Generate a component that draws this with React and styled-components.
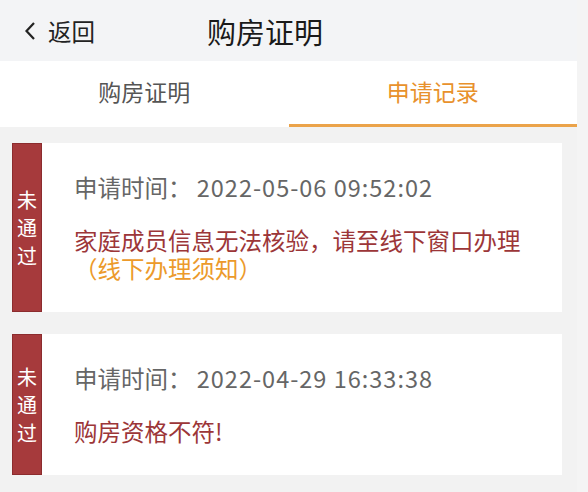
import React, {useState} from 'react';
import styled, {createGlobalStyle} from "styled-components";

const GlobalStyle = createGlobalStyle`
  html, body {
    margin: 0;
    padding: 0;
    background: #f4f4f4;
    font-family: "Noto Sans CJK SC", "Noto Sans", sans-serif;
  }
`

const Screen = styled.div`
  width: 577px;
  min-height: 492px;
  background-color: #f2f2f2;
`

const Header = styled.div`
  height: 61px;
  background-color: #f3f4f6;
  display: flex;
  align-items: center;
`

const Back = styled.div`
  display: flex;
  align-items: center;
  gap: 12px;
  padding-left: 24px;
  font-size: 23.5px;
  color: #222;
  width: 183px;
`

const Title = styled.h1`
  margin: 0;
  font-size: 29px;
  font-weight: 400;
  color: #1a1a1a;
`

const Tabs = styled.div`
  display: grid;
  grid-template-columns: 1fr 1fr;
  background-color: #fff;
  height: 66px;
`

const Tab = styled.div`
  display: flex;
  align-items: center;
  justify-content: center;
  font-size: 23px;
  padding-bottom: 4px;
  color: ${props => (props.$active ? '#e8912c' : '#555')};
  border-bottom: 3px solid ${props => (props.$active ? '#eba34a' : 'transparent')};
  cursor: pointer;
`

const List = styled.div`
  display: flex;
  flex-direction: column;
  gap: 22px;
  padding: 16px 15px 16px 12px;
`

const Card = styled.div`
  display: flex;
  background-color: #fff;
`

const Status = styled.div`
  width: 28px;
  flex-shrink: 0;
  background-color: #a63a3c;
  border: 1px solid #8c2c2e;
  color: #fff;
  font-size: 20px;
  line-height: 28px;
  display: flex;
  align-items: center;
  justify-content: center;
  text-align: center;
`

const Body = styled.div`
  flex: 1;
  padding: 30px 18px 30px 32px;
  font-size: 23.5px;
  line-height: 28px;
`

const Time = styled.div`
  color: #666;
  white-space: pre;
`

const Stamp = styled.span`
  letter-spacing: 1px;
`

const Message = styled.div`
  margin-top: 25px;
  color: #9c3638;
`

const Notice = styled.span`
  color: #ec9a2b;
`

const records = [
  {
    time: '2022-05-06 09:52:02',
    msg: '家庭成员信息无法核验，请至线下窗口办理',
    notice: '（线下办理须知）'
  },
  {
    time: '2022-04-29 16:33:38',
    msg: '购房资格不符!'
  }
]

const App = () => {
  const [tab, setTab] = useState(1)

  return (
    <>
      <GlobalStyle/>
      <Screen>
        <Header>
          <Back>
            <svg width="12" height="20" viewBox="0 0 12 20">
              <path d="M10 2 L2.5 10 L10 18" fill="none" stroke="#222" strokeWidth="2.2"/>
            </svg>
            <span>返回</span>
          </Back>
          <Title>购房证明</Title>
        </Header>
        <Tabs>
          <Tab $active={tab === 0} onClick={() => setTab(0)}>购房证明</Tab>
          <Tab $active={tab === 1} onClick={() => setTab(1)}>申请记录</Tab>
        </Tabs>
        <List>
          {records.map(r => (
            <Card key={r.time}>
              <Status>未<br/>通<br/>过</Status>
              <Body>
                <Time>申请时间： <Stamp>{r.time}</Stamp></Time>
                <Message>
                  {r.msg}
                  {r.notice && <><br/><Notice>{r.notice}</Notice></>}
                </Message>
              </Body>
            </Card>
          ))}
        </List>
      </Screen>
    </>
  );
};

export default App;
